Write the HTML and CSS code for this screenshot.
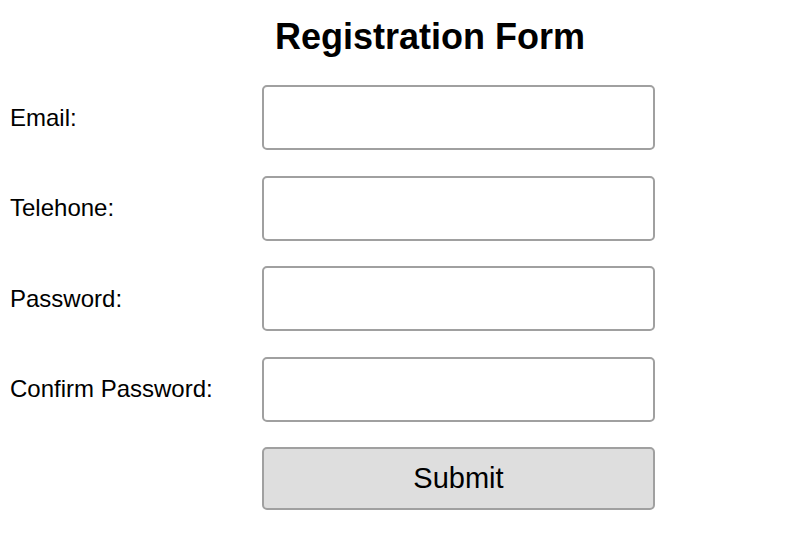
FILE: index.html
```html
<!DOCTYPE html>
<html>
<head>
<meta charset="utf-8">
<link rel="stylesheet" href="styles.css">
</head>
<body>
<div class="page">
  <h1 class="title">Registration Form</h1>
  <form class="form">
    <label class="label" for="email">Email:</label>
    <input class="field" id="email" type="text">
    <label class="label" for="tel">Telehone:</label>
    <input class="field" id="tel" type="text">
    <label class="label" for="pw">Password:</label>
    <input class="field" id="pw" type="password">
    <label class="label" for="pw2">Confirm Password:</label>
    <input class="field" id="pw2" type="password">
    <span class="label"></span>
    <button class="submit" type="button">Submit</button>
  </form>
</div>
</body>
</html>
```
FILE: styles.css
```css
html, body {
  margin: 0;
  padding: 0;
  background: #fff;
}
body {
  font-family: "Liberation Sans", Arial, sans-serif;
  color: #000;
}
.page {
  padding: 0 0 0 10px;
}
.title {
  margin: 0 0 0 50px;
  width: 740px;
  padding-top: 16px;
  height: 85px;
  box-sizing: border-box;
  font-size: 36px;
  font-weight: bold;
  line-height: 42px;
  text-align: center;
}
.form {
  display: grid;
  grid-template-columns: 252px 393px;
  row-gap: 25.5px;
  align-items: center;
}
.label {
  font-size: 24px;
}
.field, .submit {
  box-sizing: border-box;
  width: 393px;
  height: 65px;
  border: 2px solid #a0a0a0;
  border-radius: 5px;
  background: #fff;
  margin: 0;
}
.submit {
  height: 63px;
  background: #dedede;
  font-family: "Liberation Sans", Arial, sans-serif;
  font-size: 29px;
  color: #000;
}
```
